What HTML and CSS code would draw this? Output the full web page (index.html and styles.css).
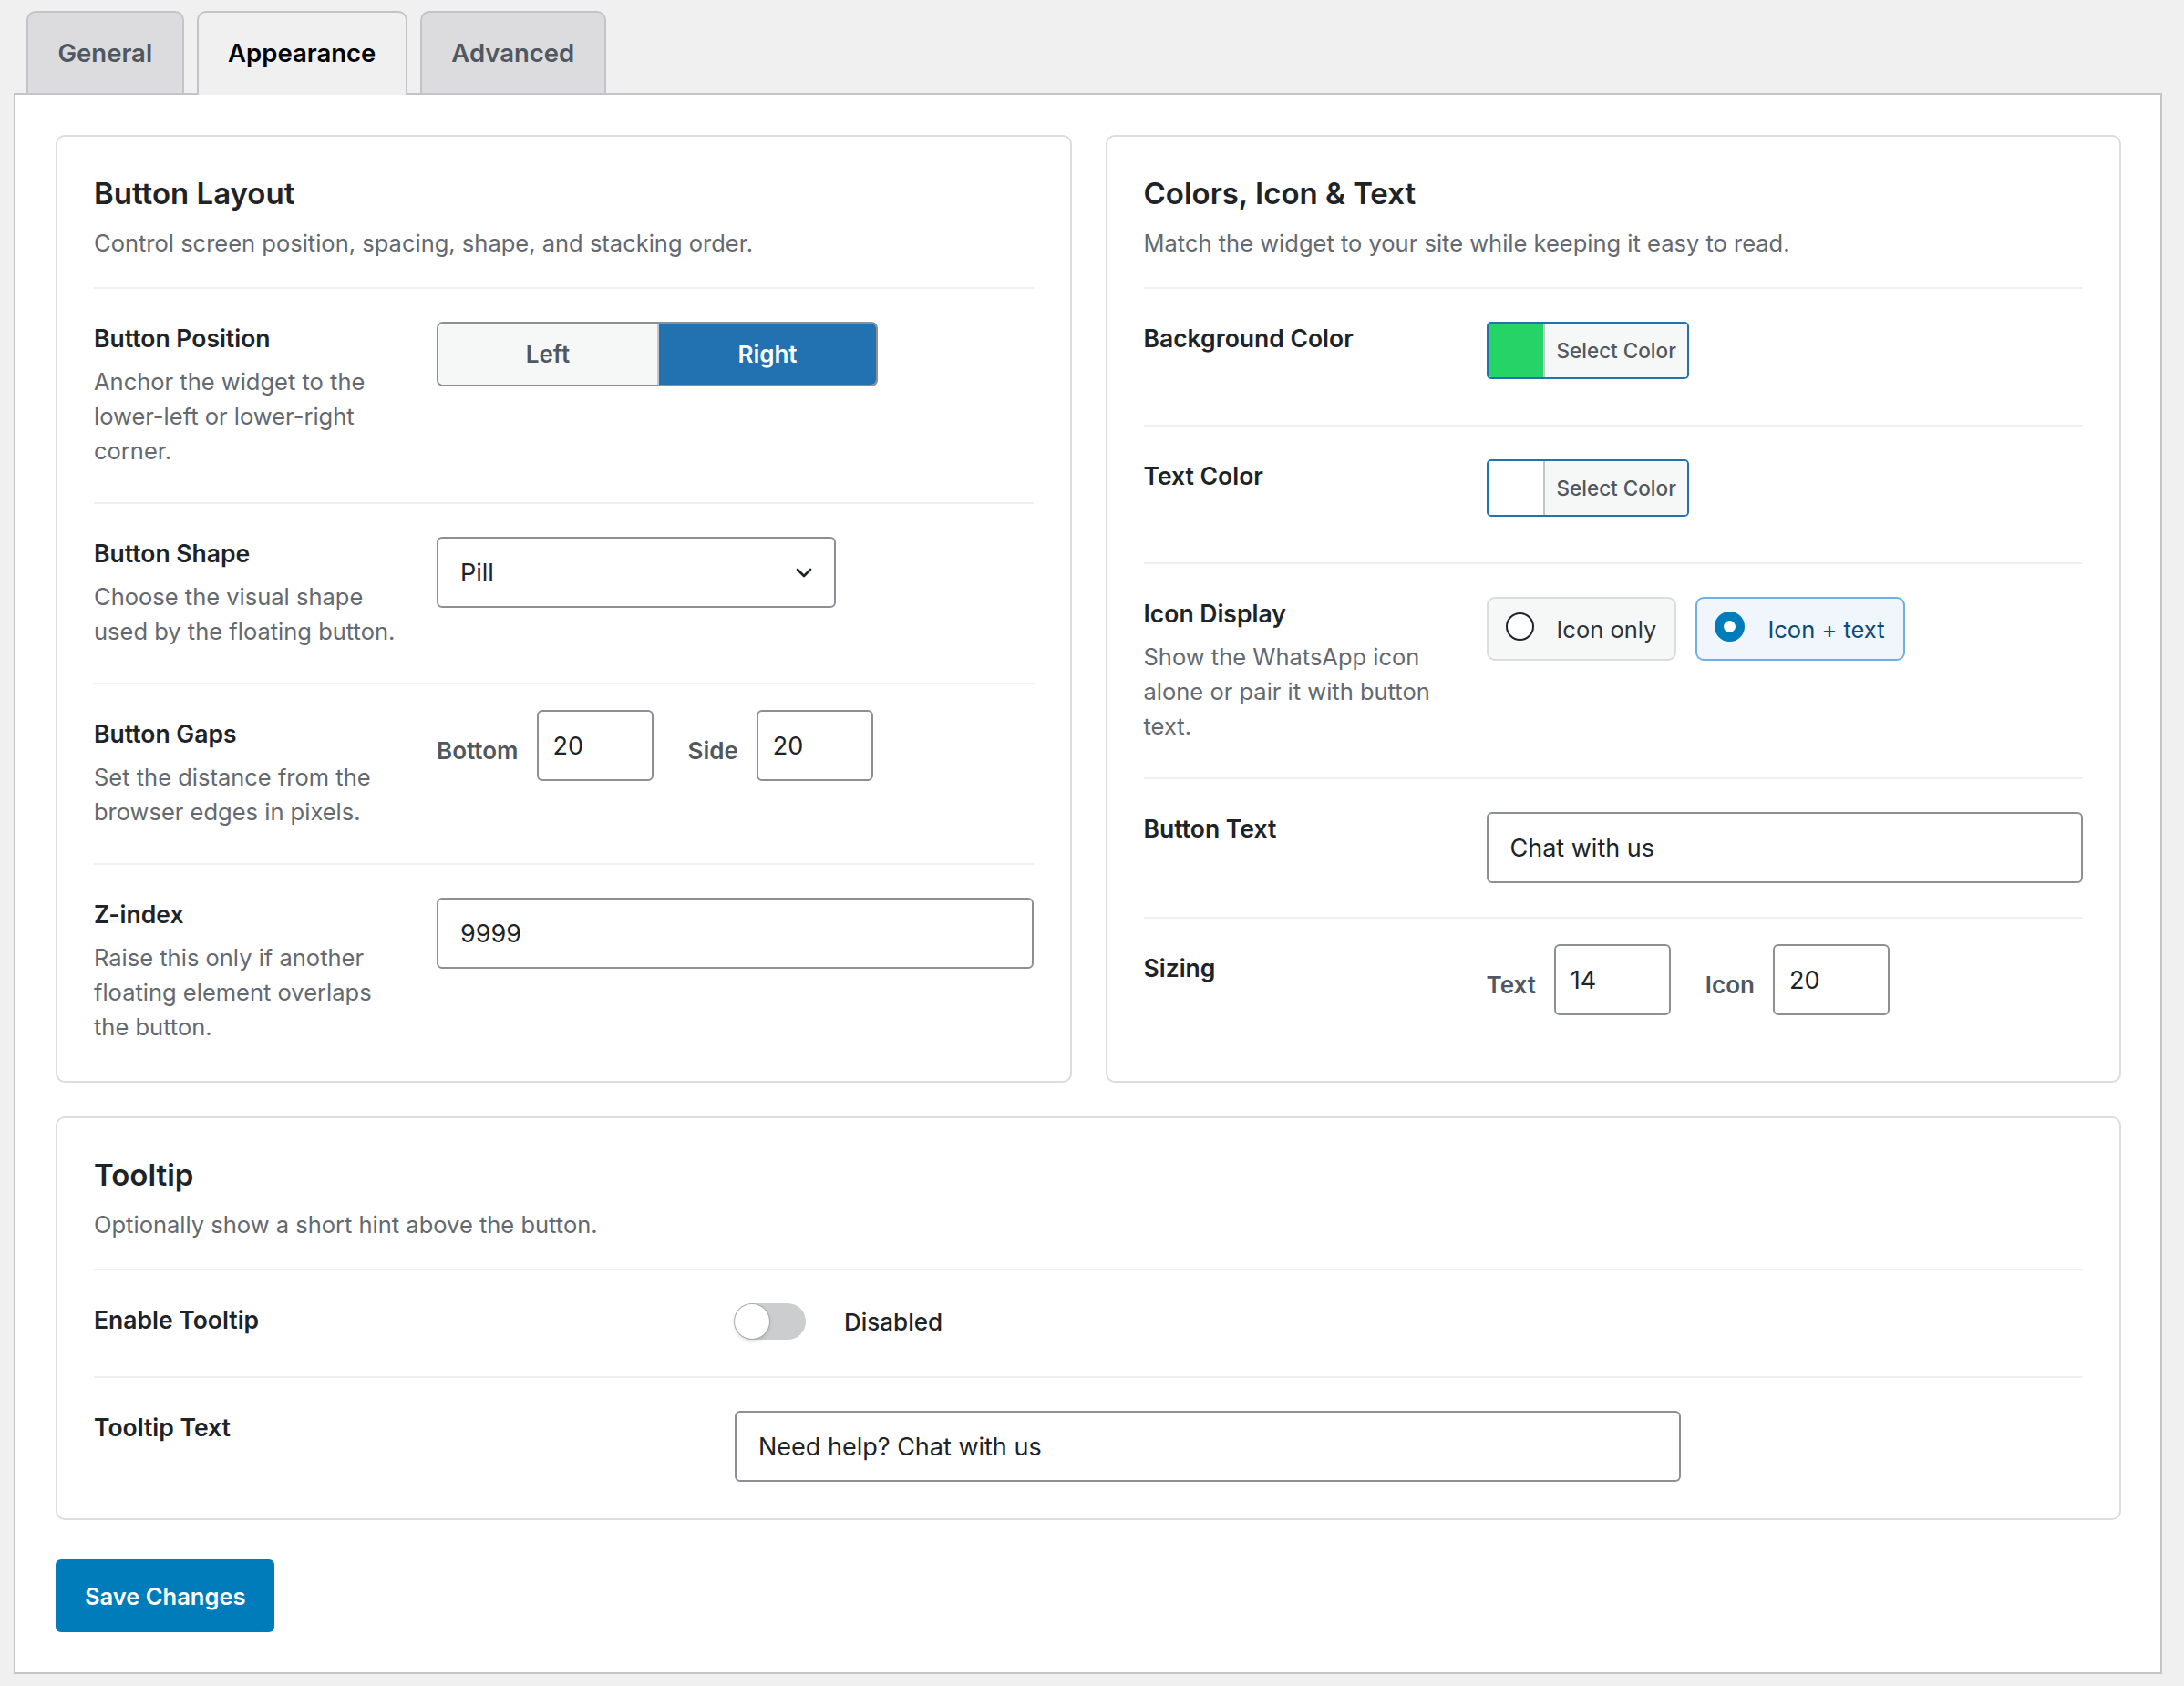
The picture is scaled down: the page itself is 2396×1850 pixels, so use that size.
FILE: index.html
```html
<!DOCTYPE html>
<html lang="en">
<head>
    <meta charset="UTF-8">
    <meta name="viewport" content="width=device-width, initial-scale=1.0">
    <title>Chat Button Settings - Appearance</title>
    <link rel="stylesheet" href="styles.css">
</head>
<body>
    <div class="wrap">
        <nav class="tabs">
            <a href="#general" class="tab">General</a>
            <a href="#appearance" class="tab tab-active">Appearance</a>
            <a href="#advanced" class="tab">Advanced</a>
        </nav>

        <form class="panel">
            <div class="card-grid">
                <section class="card">
                    <div class="card-head">
                        <h2>Button Layout</h2>
                        <p>Control screen position, spacing, shape, and stacking order.</p>
                    </div>

                    <div class="row">
                        <div class="row-label">
                            <label>Button Position</label>
                            <p class="hint">Anchor the widget to the lower-left or lower-right corner.</p>
                        </div>
                        <div class="row-control">
                            <div class="segmented">
                                <button type="button" class="seg">Left</button>
                                <button type="button" class="seg seg-on">Right</button>
                            </div>
                        </div>
                    </div>

                    <div class="row">
                        <div class="row-label">
                            <label>Button Shape</label>
                            <p class="hint">Choose the visual shape used by the floating button.</p>
                        </div>
                        <div class="row-control">
                            <div class="select">
                                <span>Pill</span>
                                <svg width="18" height="11" viewBox="0 0 18 11"><polyline points="2,2 9,9 16,2" fill="none" stroke="#1d2327" stroke-width="2.6" stroke-linecap="round" stroke-linejoin="round"/></svg>
                            </div>
                        </div>
                    </div>

                    <div class="row">
                        <div class="row-label">
                            <label>Button Gaps</label>
                            <p class="hint">Set the distance from the browser edges in pixels.</p>
                        </div>
                        <div class="row-control">
                            <div class="pair">
                                <span class="pair-label">Bottom</span>
                                <input class="field field-num" type="text" value="20">
                                <span class="pair-label pair-next">Side</span>
                                <input class="field field-num" type="text" value="20">
                            </div>
                        </div>
                    </div>

                    <div class="row">
                        <div class="row-label">
                            <label>Z-index</label>
                            <p class="hint">Raise this only if another floating element overlaps the button.</p>
                        </div>
                        <div class="row-control">
                            <input class="field field-full" type="text" value="9999">
                        </div>
                    </div>
                </section>

                <section class="card">
                    <div class="card-head">
                        <h2>Colors, Icon &amp; Text</h2>
                        <p>Match the widget to your site while keeping it easy to read.</p>
                    </div>

                    <div class="row">
                        <div class="row-label">
                            <label>Background Color</label>
                        </div>
                        <div class="row-control">
                            <div class="picker">
                                <span class="swatch swatch-green"></span>
                                <span class="picker-text">Select Color</span>
                            </div>
                        </div>
                    </div>

                    <div class="row">
                        <div class="row-label">
                            <label>Text Color</label>
                        </div>
                        <div class="row-control">
                            <div class="picker">
                                <span class="swatch"></span>
                                <span class="picker-text">Select Color</span>
                            </div>
                        </div>
                    </div>

                    <div class="row">
                        <div class="row-label">
                            <label>Icon Display</label>
                            <p class="hint">Show the WhatsApp icon alone or pair it with button text.</p>
                        </div>
                        <div class="row-control">
                            <div class="choices">
                                <span class="choice"><span class="dot"></span>Icon only</span>
                                <span class="choice choice-on"><span class="dot"></span>Icon + text</span>
                            </div>
                        </div>
                    </div>

                    <div class="row">
                        <div class="row-label">
                            <label>Button Text</label>
                        </div>
                        <div class="row-control">
                            <input class="field field-full" type="text" value="Chat with us">
                        </div>
                    </div>

                    <div class="row">
                        <div class="row-label">
                            <label>Sizing</label>
                        </div>
                        <div class="row-control">
                            <div class="pair">
                                <span class="pair-label">Text</span>
                                <input class="field field-num" type="text" value="14">
                                <span class="pair-label pair-next">Icon</span>
                                <input class="field field-num" type="text" value="20">
                            </div>
                        </div>
                    </div>
                </section>
            </div>

            <section class="card card-wide">
                <div class="card-head">
                    <h2>Tooltip</h2>
                    <p>Optionally show a short hint above the button.</p>
                </div>

                <div class="row">
                    <div class="row-label">
                        <label>Enable Tooltip</label>
                    </div>
                    <div class="row-control">
                        <span class="toggle-wrap">
                            <span class="toggle"><span class="knob"></span></span>
                            <span class="toggle-text">Disabled</span>
                        </span>
                    </div>
                </div>

                <div class="row">
                    <div class="row-label">
                        <label>Tooltip Text</label>
                    </div>
                    <div class="row-control">
                        <input class="field field-tip" type="text" value="Need help? Chat with us">
                    </div>
                </div>
            </section>

            <button type="submit" class="save">Save Changes</button>
        </form>
    </div>
</body>
</html>
```

FILE: styles.css
```css
body {
    margin: 0;
    background-color: #f0f0f0;
    font-family: Inter, 'Noto Sans', sans-serif;
    color: #1d2327;
}
.wrap {
    padding: 12px 24px 16px 15px;
}

/* tabs */
.tabs {
    display: flex;
    align-items: flex-start;
    gap: 14px;
    padding-left: 14px;
}
.tab {
    box-sizing: border-box;
    height: 90px;
    display: flex;
    align-items: center;
    padding: 0 32.5px;
    background-color: #dcdcde;
    border: 2px solid #c3c4c7;
    border-bottom: none;
    border-radius: 10px 10px 0 0;
    color: #50575e;
    font-size: 27.5px;
    font-weight: 600;
    text-decoration: none;
}
.tab-active {
    position: relative;
    z-index: 1;
    height: 92px;
    margin-bottom: -2px;
    padding-bottom: 2px;
    background-color: #f0f0f0;
    color: #000;
}

/* main panel */
.panel {
    background-color: #fff;
    border: 2px solid #c3c4c7;
    padding: 44px 43px 44px 44px;
}
.card-grid {
    display: grid;
    grid-template-columns: 1fr 1fr;
    gap: 37px;
    margin-bottom: 37px;
}
.card {
    border: 2px solid #dcdcde;
    border-radius: 10px;
    padding: 40px;
}
.card-head {
    padding-bottom: 29px;
}
.card-head h2 {
    margin: 0 0 14px;
    font-size: 33px;
    line-height: 44px;
    font-weight: 600;
}
.card-head p {
    margin: 0;
    font-size: 25.5px;
    line-height: 38px;
    color: #646970;
}

.row {
    display: grid;
    grid-template-columns: 340px 1fr;
    gap: 36px;
    padding: 35px 0 37px;
    border-top: 2px solid #f0f0f1;
}
.row:last-child {
    padding-bottom: 0;
}
.card-wide .row {
    grid-template-columns: 667px 1fr;
    padding-bottom: 36px;
}
.card-wide .row:last-child {
    padding-bottom: 0;
}
.row-label label {
    display: block;
    font-size: 26.5px;
    line-height: 38px;
    font-weight: 600;
}
.hint {
    margin: 10px 0 0;
    font-size: 25.5px;
    line-height: 38px;
    color: #646970;
}

/* segmented buttons */
.segmented {
    display: inline-flex;
    margin-top: 1px;
    border: 2px solid #8c8f94;
    border-radius: 7px;
    overflow: hidden;
}
.seg {
    width: 240px;
    height: 67px;
    border: none;
    background-color: #f6f7f7;
    color: #50575e;
    font-family: inherit;
    font-size: 26px;
    font-weight: 600;
}
.seg-on {
    border-left: 2px solid #c3c4c7;
    background-color: #2271b1;
    color: #fff;
}

/* fields */
.field,
.select {
    box-sizing: border-box;
    height: 78px;
    margin-top: 1px;
    border: 2px solid #8c8f94;
    border-radius: 6px;
    background-color: #fff;
    color: #1d2327;
    font-family: inherit;
    font-size: 27px;
}
.field {
    padding: 0 24px;
}
.field-full {
    width: 100%;
}
.field-tip {
    width: 1038px;
}
.field-num {
    width: 128px;
    padding: 0 16px;
}
.select {
    width: 438px;
    display: flex;
    align-items: center;
    justify-content: space-between;
    padding: 0 24px 0 24px;
}

.pair {
    display: flex;
    align-items: center;
    margin-top: -7px;
}
.pair .field {
    margin-top: 0;
}
.pair-label {
    padding: 10px 20px 0 0;
    font-size: 26px;
    font-weight: 600;
    color: #50575e;
}
.pair-next {
    margin-left: 38px;
}

/* color pickers */
.picker {
    display: inline-flex;
    height: 63px;
    box-sizing: border-box;
    margin: 1px 0 13px;
    border: 2px solid #2271b1;
    border-radius: 5px;
    overflow: hidden;
}
.swatch {
    width: 60px;
    background-color: #fff;
}
.swatch-green {
    background-color: #25d366;
}
.picker-text {
    padding: 0 12px 0 13px;
    border-left: 2px solid #c3c4c7;
    background-color: #f6f7f7;
    color: #50575e;
    font-size: 22.5px;
    font-weight: 500;
    line-height: 59px;
}

/* radio choices */
.choices {
    display: flex;
    gap: 21px;
    margin-top: 1px;
}
.choice {
    display: inline-flex;
    align-items: center;
    gap: 25px;
    height: 70px;
    box-sizing: border-box;
    padding: 0 20px 0 19px;
    border: 2px solid #dcdcde;
    border-radius: 9px;
    background-color: #f6f7f7;
    color: #2c3338;
    font-size: 25.5px;
}
.dot {
    box-sizing: border-box;
    width: 31px;
    height: 31px;
    margin-top: -6px;
    border: 2px solid #1d2327;
    border-radius: 50%;
    background-color: #fff;
}
.choice-on {
    border-color: #72aee6;
    background-color: #f0f6fc;
    color: #0a4b78;
}
.choice-on .dot {
    width: 33px;
    height: 33px;
    border: 10px solid #007cba;
}

/* toggle */
.toggle-wrap {
    display: inline-flex;
    align-items: center;
    gap: 42px;
    margin-top: 1px;
}
.toggle {
    position: relative;
    width: 78px;
    height: 40px;
    border-radius: 20px;
    background-color: #cbcdcf;
}
.knob {
    position: absolute;
    top: 1px;
    left: 0;
    width: 38px;
    height: 38px;
    border-radius: 50%;
    background-color: #fff;
    box-shadow: 0 0 0 1px #a7aaad, 0 3px 5px rgba(0, 0, 0, 0.12);
}
.toggle-text {
    font-size: 26px;
    font-weight: 500;
    color: #1d2327;
}

.save {
    display: block;
    margin-top: 43px;
    height: 80px;
    padding: 0 32px;
    border: none;
    border-radius: 6px;
    background-color: #007cba;
    color: #fff;
    font-family: inherit;
    font-size: 25.5px;
    font-weight: 600;
    cursor: pointer;
}
```
